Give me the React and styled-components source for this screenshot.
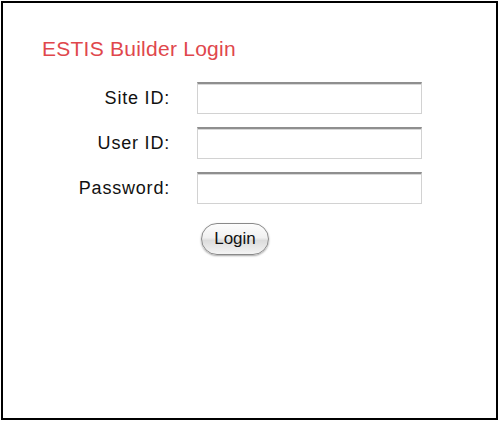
import React from 'react'
import styled, { createGlobalStyle } from 'styled-components'

const GlobalStyle = createGlobalStyle`
  html, body {
    margin: 0;
    padding: 0;
    background: #fff;
  }
  body {
    font-family: "Liberation Sans", Arial, Helvetica, sans-serif;
  }
`

const Frame = styled.div`
  box-sizing: border-box;
  margin: 1px;
  width: 497px;
  height: 419px;
  border: 2px solid #000;
  padding: 34px 0 0 39px;
`

const Title = styled.h1`
  margin: 0 0 21px 0;
  font-size: 21px;
  line-height: 24px;
  letter-spacing: 0.25px;
  font-weight: normal;
  color: #e0474c;
`

const Form = styled.form`
  display: grid;
  grid-template-columns: 128px 225px;
  column-gap: 27px;
  row-gap: 13px;
  align-items: center;
`

const Label = styled.label`
  text-align: right;
  font-size: 18px;
  letter-spacing: 0.8px;
  color: #111;
`

const Input = styled.input`
  box-sizing: border-box;
  width: 225px;
  height: 32px;
  margin: 0;
  border: 1px solid #d2d2d2;
  border-top: 2px solid #8f8f8f;
  background: #fff;
  box-shadow: inset 0 1px 0 #d8d8d8;
  outline: none;
`

const ButtonCell = styled.div`
  grid-column: 2;
  padding: 6px 0 0 4px;
`

const Button = styled.button`
  box-sizing: border-box;
  width: 68px;
  height: 32px;
  padding: 0;
  border: 1px solid #8a8a8a;
  border-radius: 16px;
  background: linear-gradient(#fdfdfd 0%, #f1f1f1 45%, #dcdcdc 55%, #f4f4f4 100%);
  box-shadow: 0 1px 2px rgba(0, 0, 0, 0.35);
  font-family: "Liberation Sans", Arial, sans-serif;
  font-size: 17px;
  color: #111;
`

const fields = [
  { id: 'site', label: 'Site ID:', type: 'text' },
  { id: 'user', label: 'User ID:', type: 'text' },
  { id: 'pass', label: 'Password:', type: 'password' },
]

export default function App() {
  return (
    <>
      <GlobalStyle />
      <Frame>
        <Title>ESTIS Builder Login</Title>
        <Form onSubmit={(e) => e.preventDefault()}>
          {fields.map((f) => (
            <React.Fragment key={f.id}>
              <Label htmlFor={f.id}>{f.label}</Label>
              <Input id={f.id} type={f.type} />
            </React.Fragment>
          ))}
          <ButtonCell>
            <Button type="submit">Login</Button>
          </ButtonCell>
        </Form>
      </Frame>
    </>
  )
}
